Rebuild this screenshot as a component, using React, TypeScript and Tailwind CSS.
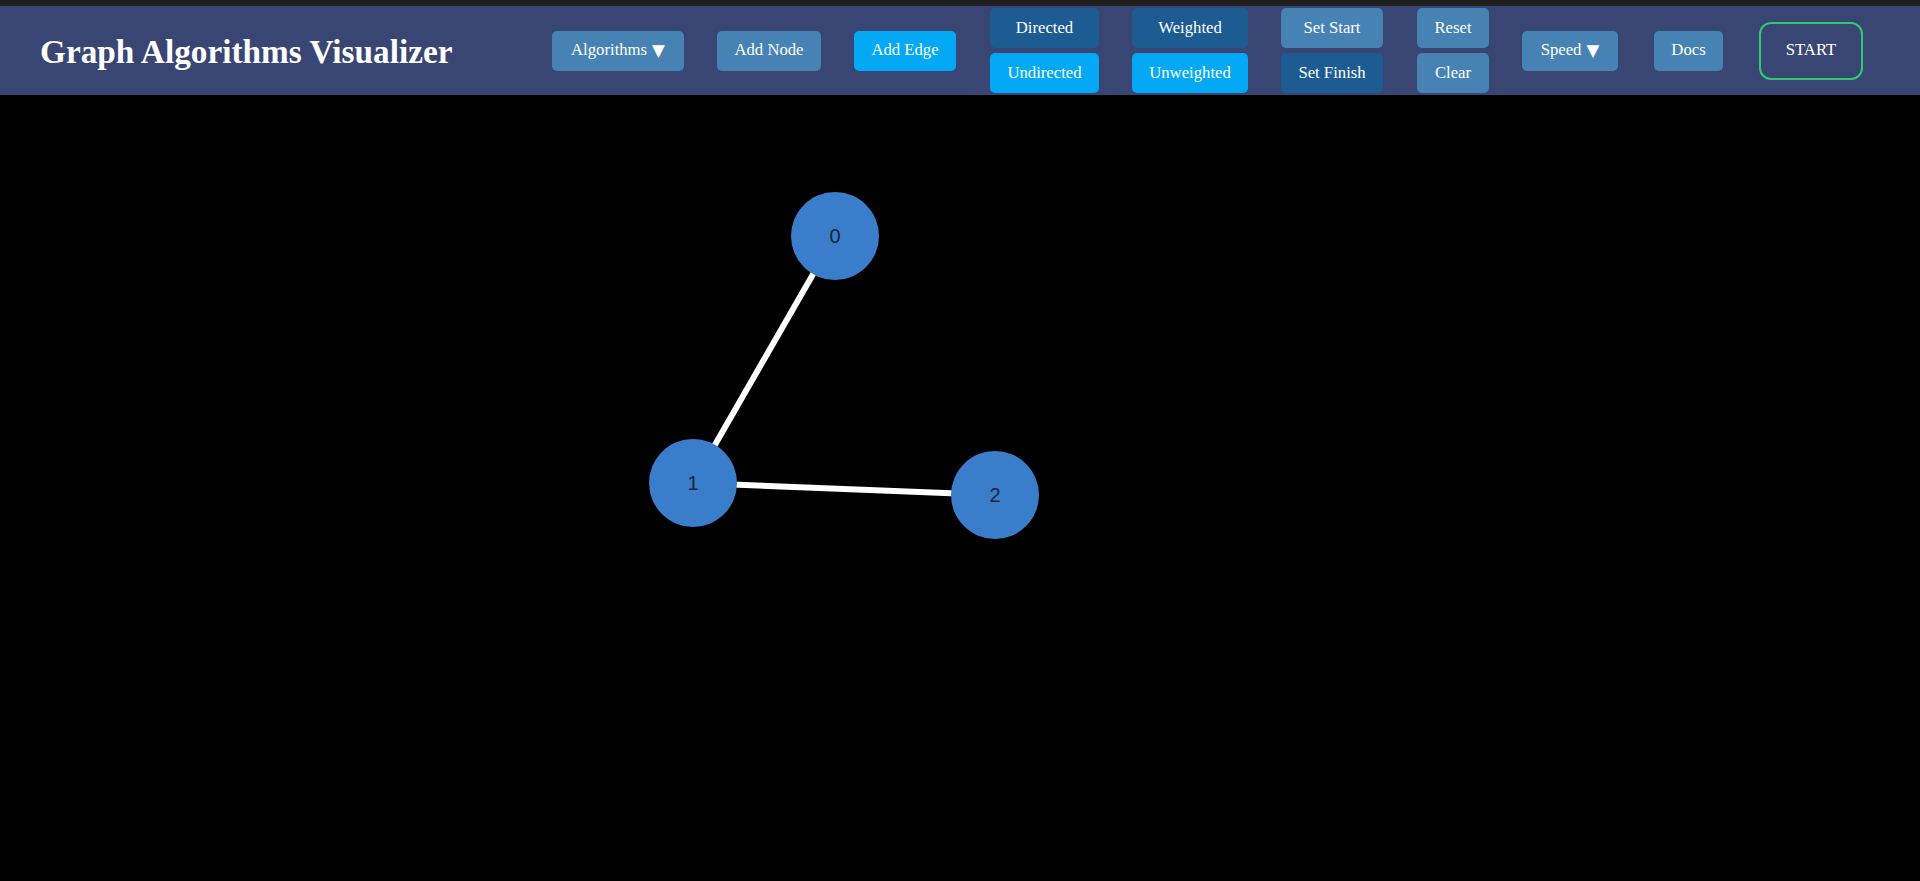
import React from "react";

const serif = { fontFamily: '"Liberation Serif", "Times New Roman", serif' };
const tri = { fontFamily: '"DejaVu Sans", sans-serif' };

function Btn({ children, cls }: { children: React.ReactNode; cls: string }) {
  return (
    <button
      className={`h-[40px] rounded-[5px] text-white text-[16.7px] leading-none flex items-center justify-center ${cls}`}
      style={serif}
    >
      {children}
    </button>
  );
}

export default function App() {
  return (
    <div className="w-[1920px] h-[881px] bg-black flex flex-col overflow-hidden">
      <div className="h-[6px] bg-[#202020] shrink-0" />
      <header className="h-[89px] bg-[#394573] flex items-center shrink-0">
        <h1
          className="ml-[40px] w-[512px] text-white text-[33.3px] font-bold leading-none whitespace-nowrap pt-[2px]"
          style={serif}
        >
          Graph Algorithms Visualizer
        </h1>
        <div className="flex items-center">
          <Btn cls="w-[132px] bg-[#4682b4]">
            Algorithms <span className="ml-[5px] text-[16.7px]" style={tri}>▼</span>
          </Btn>
          <Btn cls="ml-[33px] w-[104px] bg-[#4682b4]">Add Node</Btn>
          <Btn cls="ml-[33px] w-[102px] bg-[#03a9f4]">Add Edge</Btn>
          <div className="ml-[34px] w-[109px] flex flex-col gap-[5px]">
            <Btn cls="w-full bg-[#1d5b93]">Directed</Btn>
            <Btn cls="w-full bg-[#03a9f4]">Undirected</Btn>
          </div>
          <div className="ml-[33px] w-[116px] flex flex-col gap-[5px]">
            <Btn cls="w-full bg-[#1d5b93]">Weighted</Btn>
            <Btn cls="w-full bg-[#03a9f4]">Unweighted</Btn>
          </div>
          <div className="ml-[33px] w-[102px] flex flex-col gap-[5px]">
            <Btn cls="w-full bg-[#4682b4]">Set Start</Btn>
            <Btn cls="w-full bg-[#1d5b93]">Set Finish</Btn>
          </div>
          <div className="ml-[34px] w-[72px] flex flex-col gap-[5px]">
            <Btn cls="w-full bg-[#4682b4]">Reset</Btn>
            <Btn cls="w-full bg-[#4682b4]">Clear</Btn>
          </div>
          <Btn cls="ml-[33px] w-[96px] bg-[#4682b4]">
            Speed <span className="ml-[5px] text-[16.7px]" style={tri}>▼</span>
          </Btn>
          <Btn cls="ml-[36px] w-[69px] bg-[#4682b4]">Docs</Btn>
          <button
            className="ml-[36px] w-[104px] h-[58px] rounded-[12px] border-2 border-[#2ecc71] text-white text-[16.7px] leading-none flex items-center justify-center"
            style={serif}
          >
            START
          </button>
        </div>
      </header>
      <main className="relative flex-1 bg-black">
        <svg className="absolute inset-0" width="1920" height="786">
          <line x1="835" y1="141" x2="693" y2="388" stroke="#ffffff" strokeWidth="6" />
          <line x1="693" y1="388" x2="995" y2="400" stroke="#ffffff" strokeWidth="6" />
          {[
            { id: 0, x: 835, y: 141 },
            { id: 1, x: 693, y: 388 },
            { id: 2, x: 995, y: 400 },
          ].map((n) => (
            <g key={n.id}>
              <circle cx={n.x} cy={n.y} r="44" fill="#3a7ecb" />
              <text
                x={n.x}
                y={n.y + 7}
                textAnchor="middle"
                fontSize="20"
                fill="#16263c"
                style={{ fontFamily: '"Liberation Sans", Arial, sans-serif' }}
              >
                {n.id}
              </text>
            </g>
          ))}
        </svg>
      </main>
    </div>
  );
}
